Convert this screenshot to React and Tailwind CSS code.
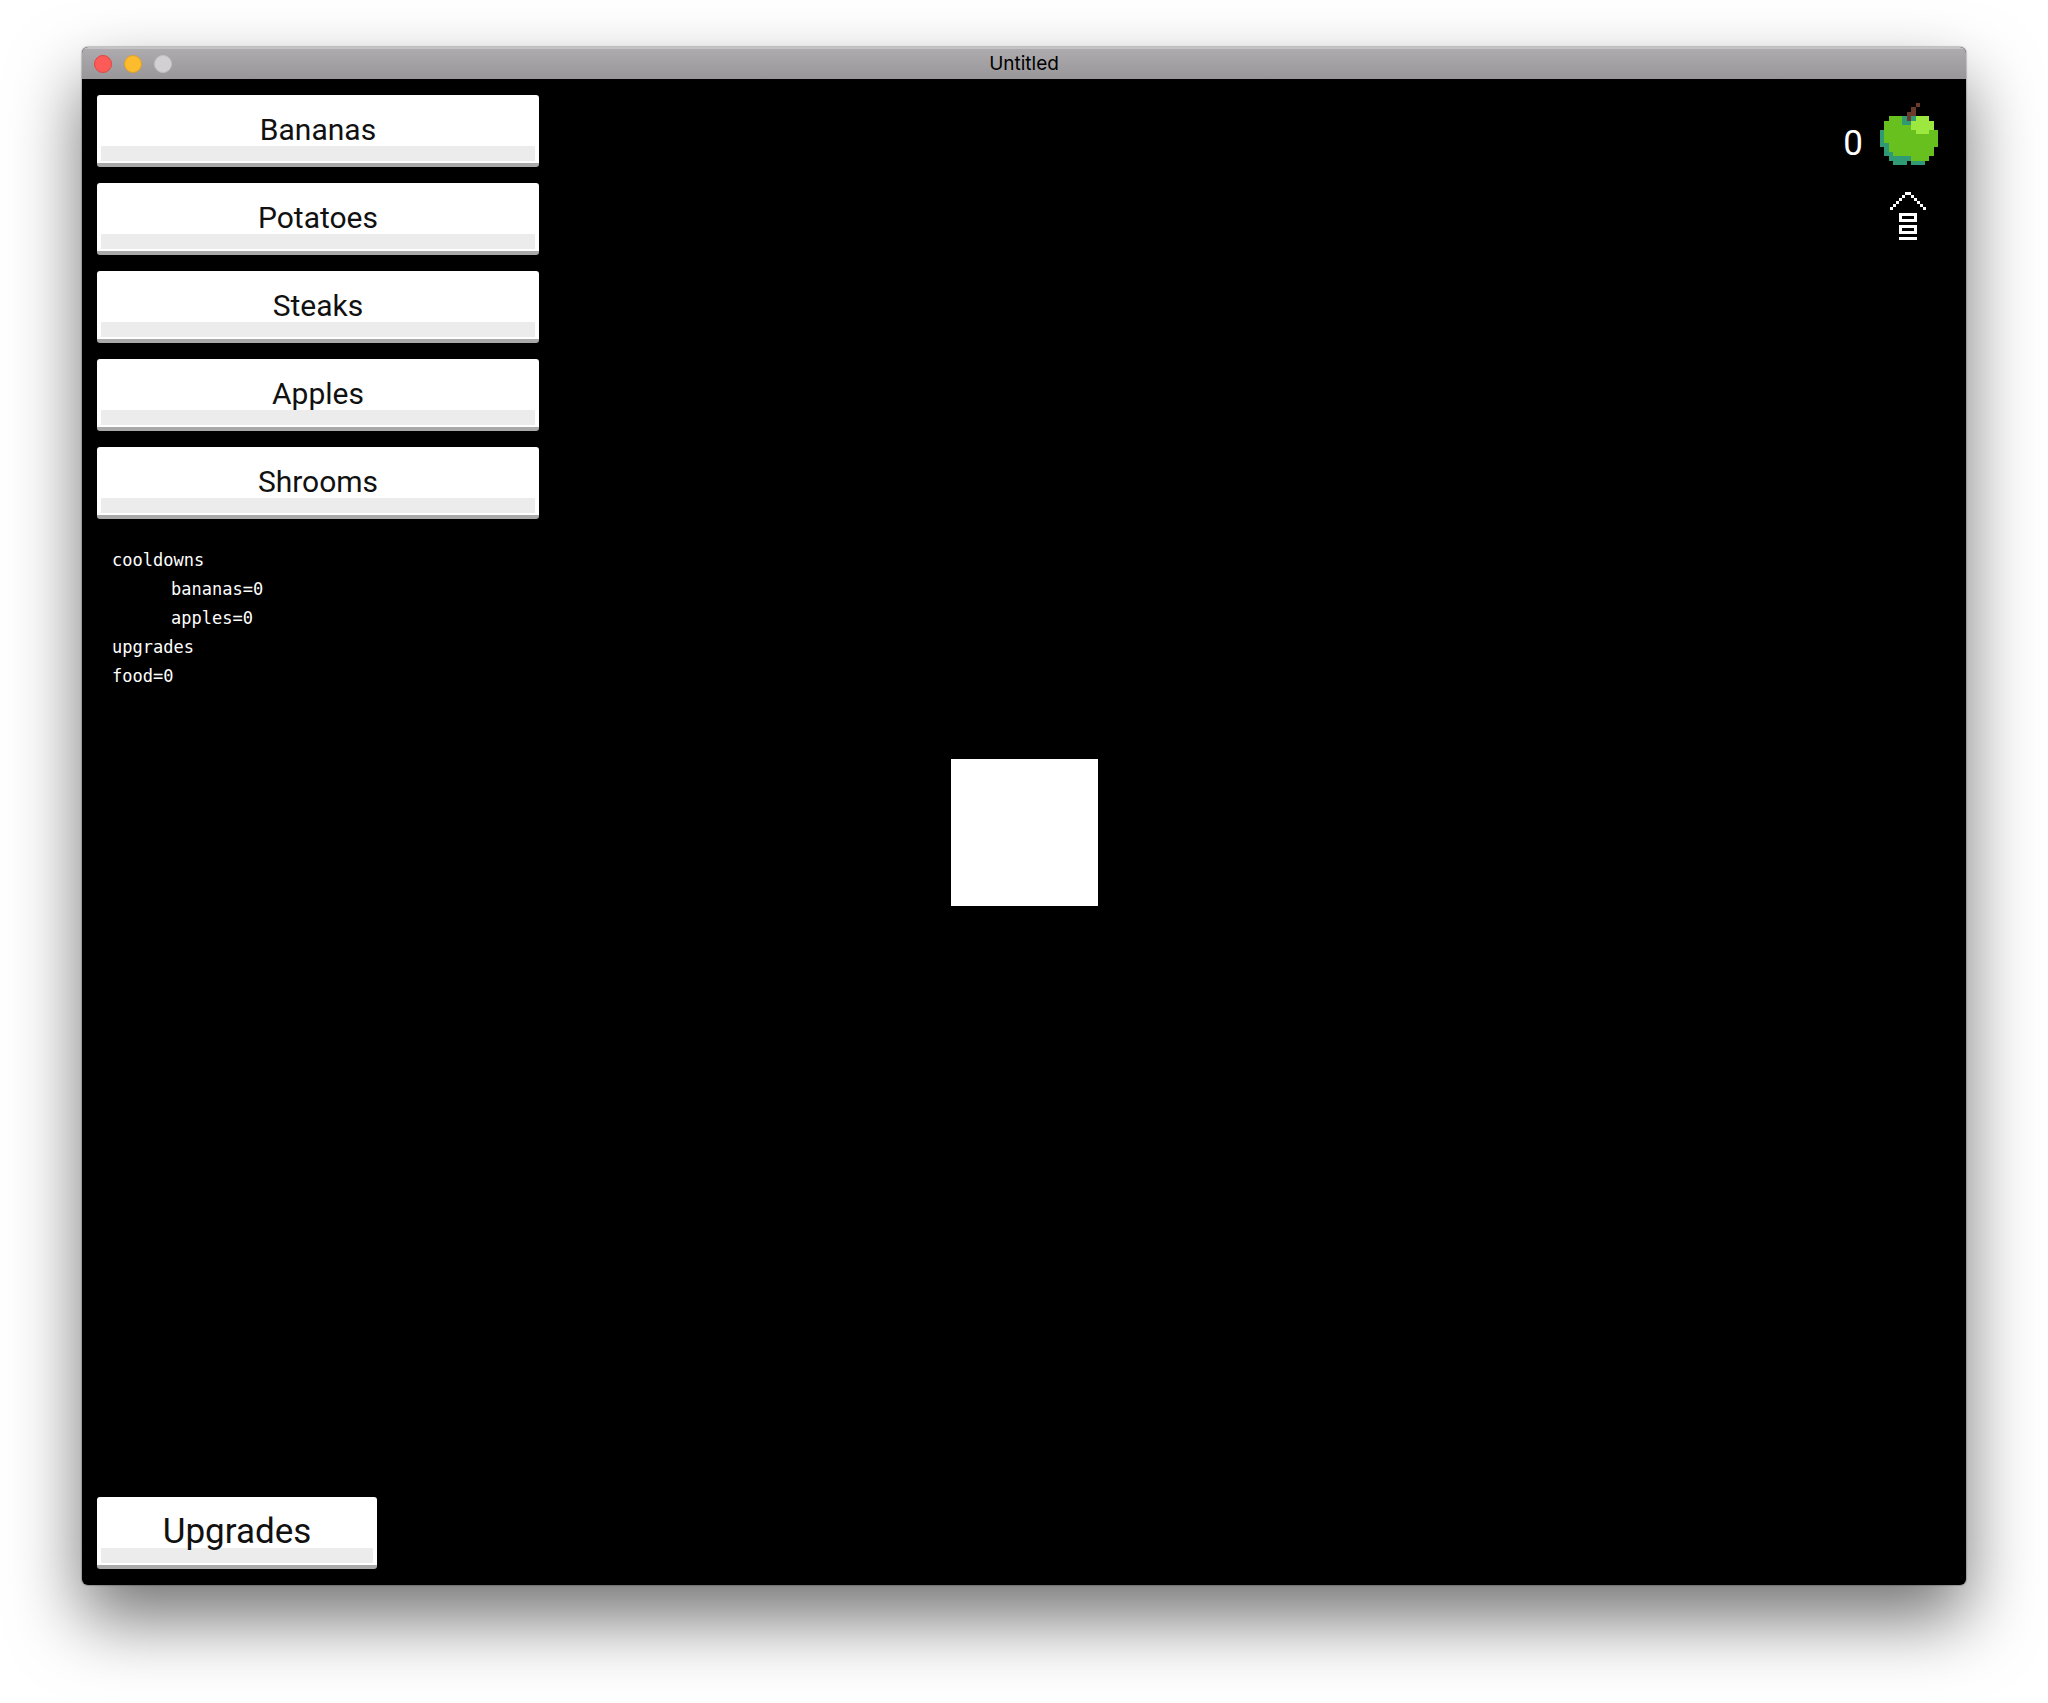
import React from "react";

const foods = ["Bananas", "Potatoes", "Steaks", "Apples", "Shrooms"];

const stats = [
  { text: "cooldowns", nested: false },
  { text: "bananas=0", nested: true },
  { text: "apples=0", nested: true },
  { text: "upgrades", nested: false },
  { text: "food=0", nested: false },
];

// One character per pixel of the sprite.
const applePixels = [
  "........s....",
  ".......s.....",
  "......ss.....",
  "..gggtstlll..",
  ".ggggttlllll.",
  ".gggggglllll.",
  "tggggggglllgg",
  "tgggggggggggg",
  "tgggggggggggg",
  "ttggggggggggg",
  ".tgggggggggg.",
  ".ttggggggggg.",
  "..tttttgggg..",
  "...ttt.ttt...",
];

const housePixels = [
  ".....ww.....",
  "....w..w....",
  "...w....w...",
  "..w......w..",
  ".w........w.",
  "w..........w",
  "............",
  "...wwwwww...",
  "...w....w...",
  "...wwwwww...",
  "............",
  "...wwwwww...",
  "...w....w...",
  "...wwwwww...",
  "............",
  "...wwwwww...",
];

const palette = {
  g: "#67c01e",
  l: "#9ce83f",
  t: "#2f9a74",
  s: "#6b3a2c",
  w: "#ffffff",
};

function Sprite({ rows, label, className }) {
  return (
    <svg
      role="img"
      aria-label={label}
      className={className}
      viewBox={`0 0 ${rows[0].length} ${rows.length}`}
      preserveAspectRatio="none"
      shapeRendering="crispEdges"
    >
      {rows.flatMap((row, y) =>
        [...row].map((c, x) =>
          palette[c] ? (
            <rect key={`${x}-${y}`} x={x} y={y} width="1" height="1" fill={palette[c]} />
          ) : null
        )
      )}
    </svg>
  );
}

function GameButton({ children, className }) {
  return (
    <button
      type="button"
      className={`flex h-[72px] flex-col rounded-[3px] border-b-4 border-[#a9a9a9] bg-white px-1 pb-0.5 text-[#111] ${className}`}
    >
      <span className="grid w-full flex-1 place-items-center bg-[linear-gradient(to_top,#ececec_15px,transparent_15px)] pt-1">
        {children}
      </span>
    </button>
  );
}

function TitleBar() {
  return (
    <header className="grid h-8 grid-cols-[1fr_auto_1fr] items-center border-t-2 border-[#c4c2c4] bg-linear-to-b from-[#adabad] to-[#989698] px-3">
      <div className="flex gap-3">
        <button type="button" aria-label="Close" className="size-[18px] rounded-full border border-[#e2463f] bg-[#fc5b57]" />
        <button type="button" aria-label="Minimize" className="size-[18px] rounded-full border border-[#e0a02a] bg-[#fdbc2e]" />
        <button type="button" aria-label="Zoom" className="size-[18px] rounded-full border border-[#c3c1c3] bg-[#d2d0d2]" />
      </div>
      <h1 className="font-['Inter',sans-serif] text-[19px] leading-6 text-black">Untitled</h1>
    </header>
  );
}

export default function App() {
  return (
    <div className="flex min-h-screen flex-col bg-white px-[82px] pt-[47px] pb-[118px] font-['Roboto',sans-serif]">
      <div className="flex flex-1 flex-col overflow-hidden rounded-[6px] bg-black shadow-[0_0_1px_1px_rgba(0,0,0,0.2),0_34px_70px_rgba(0,0,0,0.55)]">
        <TitleBar />
        <main className="grid flex-1 grid-cols-[1fr_auto_1fr] px-[15px] py-4">
          <div className="flex flex-col items-start justify-between">
            <div>
              <nav className="flex flex-col gap-4">
                {foods.map((food) => (
                  <GameButton key={food} className="w-[442px] text-[30px] leading-9">
                    {food}
                  </GameButton>
                ))}
              </nav>
              <ul className="mt-[27px] ml-[15px] font-['DejaVu_Sans_Mono',monospace] text-[17px] leading-[29px] text-white">
                {stats.map(({ text, nested }) => (
                  <li key={text} className={nested ? "pl-[59px]" : ""}>
                    {text}
                  </li>
                ))}
              </ul>
            </div>
            <GameButton className="w-[280px] text-[35px] leading-9">Upgrades</GameButton>
          </div>
          <div className="size-[147px] self-center bg-white" />
          <div className="flex flex-col items-end pt-2 pr-[13px] text-white">
            <div className="flex items-center gap-[17px]">
              <span className="pt-5 text-[35px] leading-9">0</span>
              <Sprite rows={applePixels} label="Apple" className="h-[62px] w-[58px]" />
            </div>
            <button type="button" aria-label="House" className="mt-[27px] mr-3">
              <Sprite rows={housePixels} label="House" className="h-12 w-9" />
            </button>
          </div>
        </main>
      </div>
    </div>
  );
}
